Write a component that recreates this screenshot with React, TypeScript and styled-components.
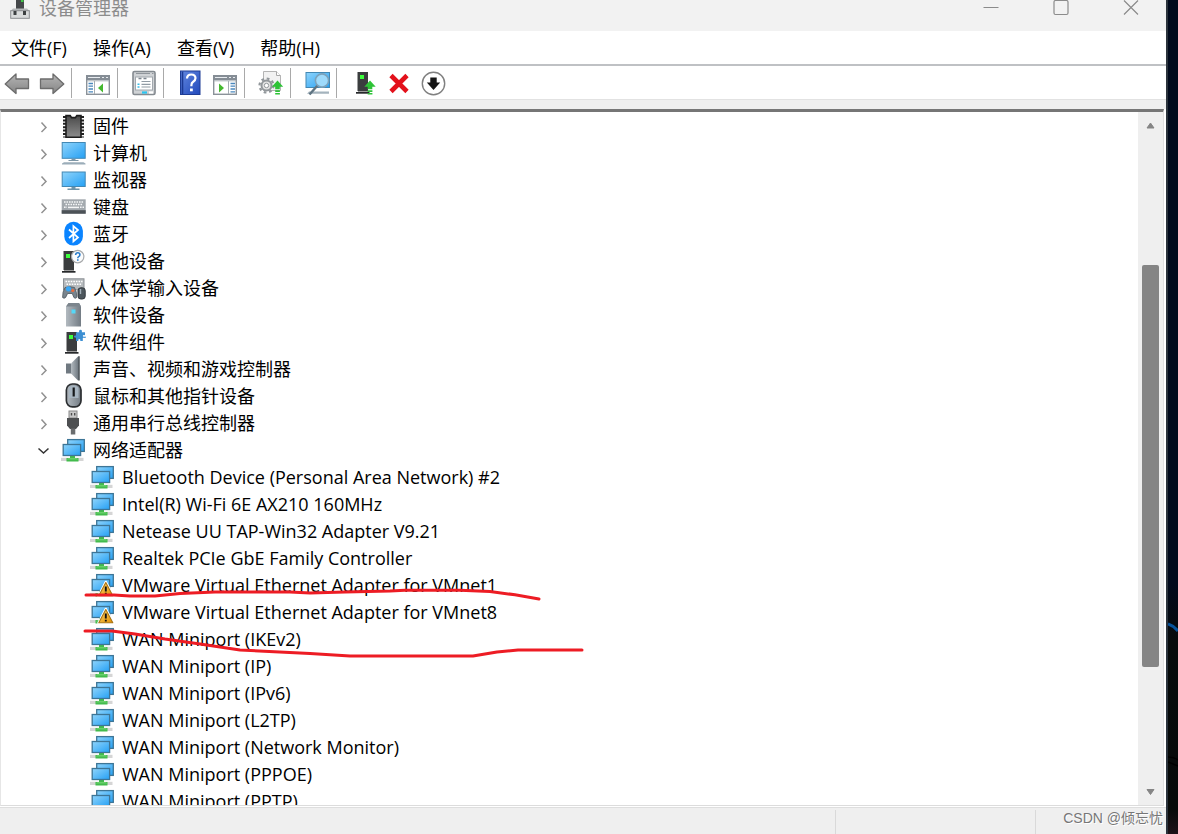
import React from "react";
import styled, { createGlobalStyle } from "styled-components";

const GlobalStyle = createGlobalStyle`
  * { box-sizing: border-box; }
  body {
    margin: 0;
    font-family: "Open Sans", "Noto Sans CJK SC", sans-serif;
    font-size: 18px;
    color: #000;
    background: #020b1b;
  }
  button { font: inherit; color: inherit; border: 0; padding: 0; background: none; }
  ul { list-style: none; margin: 0; padding: 0; }
  svg { display: block; flex: none; }
`;

const Desktop = styled.div`
  display: grid;
  grid-template-columns: minmax(0, 1fr) 12px;
  height: 100vh;
`;

const AppWindow = styled.main`
  display: flex;
  flex-direction: column;
  min-width: 0;
  min-height: 0;
  background: #fff;
`;

const Wallpaper = styled.div`
  border-left: 2px solid #2b333c;
  background: linear-gradient(#010a1c 0%, #010a1c 70%, #070b0c 77%, #070a09 97%, #1d1218 100%);
  overflow: hidden;
  display: flex;
  align-items: flex-end;
`;

const TitleBar = styled.header`
  display: flex;
  align-items: flex-start;
  height: 31px;
  padding-left: 10px;
  background: #f2f2f2;
`;

const Title = styled.h1`
  flex: 1;
  margin: 0 0 0 9px;
  font-size: 18px;
  line-height: 16px;
  font-weight: 400;
  color: #8c8c8c;
`;

const CaptionButton = styled.button`
  display: flex;
  justify-content: center;
  width: 70px;
  height: 31px;
`;

const MenuBar = styled.nav`
  display: flex;
  height: 33px;
  margin-left: -2px;
`;

const MenuItem = styled.button`
  padding: 0 13px;
  line-height: 34px;
  white-space: nowrap;
`;

const ToolBar = styled.div`
  display: flex;
  align-items: center;
  height: 35px;
  border-top: 2px solid #bfc1c4;
`;

const ToolButton = styled.button`
  display: flex;
  justify-content: center;
  align-items: center;
  width: 35px;
  height: 33px;
  &:first-child { margin-left: -1px; }
`;

const ToolDivider = styled.span`
  width: 1px;
  height: 30px;
  margin: 0 8px 0 2px;
  background: #a9a9a9;
`;

const Band = styled.div`
  height: 10px;
  background: #efefef;
  border-top: 1px solid #e2e2e2;
`;

const TreeFrame = styled.section`
  position: relative;
  flex: 1;
  min-height: 0;
  display: flex;
  margin-right: 2px;
  border-top: 3px solid #767676;
  border-bottom: 1px solid #dcdcdc;
  border-left: 1px solid #e6e6e6;
  border-right: 1px solid #dfdfdf;
`;

const TreeViewport = styled.div`
  flex: 1;
  min-width: 0;
  padding-top: 1px;
  overflow: hidden;
`;

const TreeRow = styled.div<{ $child?: boolean }>`
  display: flex;
  align-items: center;
  gap: 6px;
  height: 27px;
  padding-left: ${(p) => (p.$child ? 89 : 30)}px;
  line-height: 27px;
  white-space: nowrap;
`;

const Expander = styled.button`
  display: flex;
  align-items: center;
  justify-content: center;
  width: 24px;
  height: 27px;
`;

const ScrollBar = styled.div`
  display: flex;
  flex-direction: column;
  align-items: center;
  width: 25px;
  background: #efefef;
`;

const ScrollArrow = styled.button`
  display: flex;
  align-items: center;
  justify-content: center;
  width: 25px;
  height: 27px;
`;

const ScrollTrack = styled.div`
  display: grid;
  grid-template-rows: 126fr 402fr 111fr;
  flex: 1;
  width: 17px;
`;

const ScrollThumb = styled.div`
  grid-row: 2;
  border-radius: 2px;
  background: #858585;
`;

const Annotation = styled.svg`
  position: absolute;
  left: 0;
  top: 0;
  pointer-events: none;
`;

const StatusBar = styled.footer`
  display: grid;
  grid-template-columns: minmax(0, 1fr) 200px 131px;
  height: 27px;
  margin-top: 1px;
  background: #efefef;
  border-top: 1px solid #dedede;
`;

const StatusCell = styled.div`
  display: flex;
  align-items: flex-start;
  justify-content: flex-end;
  margin-top: 2px;
  padding-right: 3px;
  border-left: 1px solid #d9d9d9;
  font-family: "Liberation Sans", "Noto Sans CJK SC", sans-serif;
  font-size: 14px;
  line-height: 16px;
  color: #777;
  white-space: nowrap;
  text-shadow: 1px 1px 0 #fff;
  &:first-child { border-left: 0; }
`;

const Gradients = () => (
  <svg width="0" height="0" aria-hidden>
    <defs>
      <linearGradient id="screen" x1="0" y1="0" x2="1" y2="1">
        <stop offset="0" stopColor="#8fd4fb" />
        <stop offset="1" stopColor="#25a0f4" />
      </linearGradient>
      <linearGradient id="steel" x1="0" y1="0" x2="1" y2="0">
        <stop offset="0" stopColor="#b3bac0" />
        <stop offset="1" stopColor="#737c84" />
      </linearGradient>
      <linearGradient id="chip" x1="0" y1="0" x2="0" y2="1">
        <stop offset="0" stopColor="#4a4a4a" />
        <stop offset="1" stopColor="#8b8b8b" />
      </linearGradient>
      <linearGradient id="arrow" x1="0" y1="0" x2="0" y2="1">
        <stop offset="0" stopColor="#b5b5b5" />
        <stop offset="1" stopColor="#858585" />
      </linearGradient>
      <linearGradient id="help" x1="0" y1="0" x2="1" y2="1">
        <stop offset="0" stopColor="#6288e0" />
        <stop offset="1" stopColor="#2149bb" />
      </linearGradient>
      <linearGradient id="warn" x1="0" y1="0" x2="1" y2="1">
        <stop offset="0" stopColor="#ffd66b" />
        <stop offset="1" stopColor="#e08d00" />
      </linearGradient>
    </defs>
  </svg>
);

const Glyph = ({ children }: { children: React.ReactNode }) => (
  <svg width="26" height="27" viewBox="0 0 26 27" aria-hidden>{children}</svg>
);

const Network = ({ warning }: { warning?: boolean }) => (
  <Glyph>
    <rect x="0" y="20.8" width="22.5" height="3.2" fill="#d5d5d5" />
    <path d="M9 18h5v3h3.500v3.500H5.500V21H9z" fill="#43bb4d" />
    <path d="M5.500 22.500l2-1.500h8l2 1.500z" fill="#69cf6c" />
    <rect x="6.7" y="2.6" width="16.6" height="11.8" fill="url(#screen)" stroke="#3d7596" strokeWidth="1.3" />
    <rect x="2.2" y="7.5" width="17.4" height="11" fill="url(#screen)" stroke="#3d7596" strokeWidth="1.3" />
    {warning && (
      <>
        <path d="M8.500 24L15.800 10l7.400 14z" fill="url(#warn)" stroke="#fff" strokeWidth="2.6" strokeLinejoin="round" />
        <path d="M8.800 23.800L15.800 10.600l7 13.200z" fill="url(#warn)" stroke="#a87415" strokeWidth="1.1" strokeLinejoin="round" />
        <path d="M15.8 14.5v5M15.8 20.8v1.8" stroke="#111" strokeWidth="1.9" />
      </>
    )}
  </Glyph>
);

const Firmware = () => (
  <Glyph>
    <path d="M3.5 3v21.5M21.5 3v21.5" stroke="#222" strokeWidth="3" strokeDasharray="2 1.4" />
    <path d="M5 2.6h4.2l1.4 2h3.8l1.4-2H20v21.6H5z" fill="url(#chip)" stroke="#1d1d1d" strokeWidth="1.6" />
  </Glyph>
);

const Computer = () => (
  <Glyph>
    <rect x="1.2" y="2.5" width="23" height="15.8" fill="url(#screen)" stroke="#4288b4" />
    <path d="M10.5 19h4v1h3v1h-10v-1h3z" fill="#7d96a6" />
    <path d="M3 22.200h19.500l2 1.200v1.200H1v-1.200z" fill="#9badb9" />
  </Glyph>
);

const Monitor = () => (
  <Glyph>
    <rect x="1.2" y="5" width="23" height="14.5" fill="url(#screen)" stroke="#4288b4" />
    <path d="M10.5 20h4v1.600h4v1.400h-12v-1.400h4z" fill="#6e94a9" />
  </Glyph>
);

const Keyboard = () => (
  <Glyph>
    <rect x="0.7" y="5.3" width="24" height="14.4" fill="#a3a9ae" />
    <rect x="0.7" y="16.2" width="24" height="3.5" fill="#4c5257" />
    <path d="M3 8h20M4.5 10.6h17M3 13.2h3M19 13.2h4" stroke="#f5f6f7" strokeWidth="1.5" strokeDasharray="1.6 .9" />
    <path d="M7 13.4h11" stroke="#f5f6f7" strokeWidth="1.5" />
  </Glyph>
);

const Bluetooth = () => (
  <Glyph>
    <rect x="3.3" y="0.8" width="18.6" height="23.8" rx="9" fill="#0a84ff" />
    <path d="M8 8.500l9 8-4.600 4V5l4.600 4-9 8" fill="none" stroke="#fff" strokeWidth="1.7" />
  </Glyph>
);

const Tower = ({ x = 0 }: { x?: number }) => (
  <g transform={`translate(${x} 0)`}>
    <path d="M2.5 3H13v19H2.5z" fill="#3b3d3f" />
    <path d="M1 23h13.5v1.7H1z" fill="#26282a" />
    <path d="M3 22h10v1H3z" fill="#9b9b9b" />
    <rect x="5" y="6" width="4" height="4" fill="#3dff3d" />
  </g>
);

const OtherDevice = () => (
  <Glyph>
    <Tower />
    <circle cx="16.7" cy="8.6" r="6.2" fill="#fbfcfd" stroke="#a7a9ab" strokeWidth="1.2" />
    <path d="M14.6 7q.2-2.2 2.2-2.2t2.1 1.9q0 1.2-1.2 1.9-.9.5-.9 1.6M16.8 11.2v1.5" fill="none" stroke="#287bca" strokeWidth="1.6" />
  </Glyph>
);

const HumanInput = () => (
  <Glyph>
    <rect x="2.5" y="3.8" width="20.5" height="11" fill="#b6babd" stroke="#8b9095" />
    <path d="M4.5 6.5h17M5.5 9.2h15" stroke="#fff" strokeWidth="1.5" strokeDasharray="1.6 1" />
    <path d="M4 12.5q5-1.6 9.500 0 2.600 4.500 2.200 10-1.600 1.500-2.800 0l-1.600-4H6.600l-2 4q-1.600 1.500-3 0-.3-5.500 2.400-10z" fill="#7a858e" stroke="#4b555c" strokeWidth=".8" />
    <circle cx="7.500" cy="13.800" r="2.600" fill="#37a7f7" />
    <circle cx="11.800" cy="15.500" r="1.500" fill="#ef6a39" />
    <rect x="17" y="12.800" width="7.200" height="11.200" rx="2.800" fill="#4d565d" stroke="#33393e" />
    <path d="M19.500 14v5" stroke="#a3b0ba" strokeWidth="1.400" />
  </Glyph>
);

const SoftwareDevice = () => (
  <Glyph>
    <path d="M7.500 1h10.500l2 3.500v20H5v-20z" fill="url(#steel)" />
    <path d="M7.500 1h10.500l2 3.500H5z" fill="#7c858d" />
    <rect x="10.500" y="7.500" width="4" height="4" fill="#55d8f8" />
  </Glyph>
);

const SoftwareComponent = () => (
  <Glyph>
    <Tower x={3} />
    <path
      d="M15 3.200h3.200q-.7-2.500 1.300-2.500t1.300 2.500H24v3q-2.200-.6-2.200.8t2.900.4v1.600q-2.900-.4-2.900 0V12h-2.500q.4-2-1-2t-1 2H15V8.500q-2 .5-2-1t2-1z"
      fill="#3c8fd2"
    />
  </Glyph>
);

const Speaker = () => (
  <Glyph>
    <path d="M5 7.500h5v10H5z" fill="#707981" />
    <path d="M10 7.500L17 .5v24l-7-7z" fill="url(#steel)" />
    <path d="M17 .3h1.800v24.200H17z" fill="#565d63" />
  </Glyph>
);

const Mouse = () => (
  <Glyph>
    <rect x="5.400" y="1" width="14.600" height="22.800" rx="6" fill="url(#steel)" stroke="#2b2e31" strokeWidth="1.700" />
    <path d="M8 5q1-2.500 4.700-2.500T17.500 5v10h-9.500z" fill="#a7b5c1" />
    <path d="M12.700 4.500v9" stroke="#17191b" strokeWidth="2.200" />
  </Glyph>
);

const Usb = () => (
  <Glyph>
    <rect x="8" y="1" width="8" height="7" fill="#c9c9c9" stroke="#8a8a8a" />
    <path d="M10.500 3v2.500M13.700 3v2.500" stroke="#4e4e4e" strokeWidth="1.400" />
    <path d="M6 8h12v7.500L15 19H9l-3-3.500z" fill="#4d4f51" />
    <path d="M9.800 18.500h4.500v6H9.800z" fill="#6a6c6e" />
  </Glyph>
);

const ToolGlyph = ({ children }: { children: React.ReactNode }) => (
  <svg width="26" height="26" viewBox="0 0 26 26" aria-hidden>{children}</svg>
);

const ArrowPath = () => (
  <path d="M1.200 14L12 4v5h12.500v9.500H12V23.500z" fill="url(#arrow)" stroke="#6c6c6c" strokeWidth="1.300" strokeLinejoin="round" />
);

const GreenUp = () => (
  <g fill="#2ec337">
    <path d="M19.500 10.500l5.700 6.200h-3.400v2.500h-4.600v-2.500h-3.400z" />
    <path d="M17.200 20.300h4.700v1.600h-4.700zM17.200 23h4.700v1.600h-4.700z" />
  </g>
);

const Panel = ({ mirrored }: { mirrored?: boolean }) => (
  <ToolGlyph>
    <rect x="1.700" y="5.700" width="22.600" height="18.600" fill="#fff" stroke="#8b9299" strokeWidth="1.400" />
    <path d="M1 5h24v5H1z" fill="#858d95" />
    <path d="M3 7.500h12M17 7.500h2M21 7.500h2" stroke="#e8ecf0" strokeWidth="1.200" />
    <path d={mirrored ? "M2 10.800h22M16.500 11v13" : "M2 10.800h22M9.500 11v13"} stroke="#a6adb3" />
    <path
      d={mirrored ? "M18.500 13.500h4.500M18.500 16.200h4.500M18.500 19h4.500M18.500 21.800h4.500" : "M3.500 13.500H8M3.500 16.200H8M3.500 19H8M3.500 21.800H8"}
      stroke="#4b88bd"
      strokeWidth="1.300"
    />
    <path d={mirrored ? "M7 13.500l5 4.500-5 4.500z" : "M18 13.500l-5 4.500 5 4.500z"} fill="#45b82f" />
  </ToolGlyph>
);

const tools: { label: string; icon: React.ReactNode; divider?: boolean }[] = [
  { label: "后退", icon: <ToolGlyph><ArrowPath /></ToolGlyph> },
  { label: "前进", icon: <ToolGlyph><g transform="matrix(-1 0 0 1 26 0)"><ArrowPath /></g></ToolGlyph>, divider: true },
  { label: "显示/隐藏控制台树", icon: <Panel />, divider: true },
  {
    label: "属性",
    divider: true,
    icon: (
      <ToolGlyph>
        <rect x="2" y="1.500" width="22" height="23" rx="1.500" fill="#cfd2d5" stroke="#848a90" strokeWidth="1.600" />
        <path d="M5 3.500h14M21 3.500h1.500" stroke="#8f959b" strokeWidth="1.200" />
        <rect x="4.500" y="7" width="17" height="13" fill="#fff" stroke="#a2a8ae" />
        <path d="M7.500 8.500h3M12.500 8.500h3" stroke="#7c858e" strokeWidth="1.500" />
        <path d="M10.500 11.500h9M10.500 14.300h9M10.500 17h9" stroke="#919ba4" strokeWidth="1.200" />
        <path d="M6.500 14.300h2M6.500 17h2" stroke="#37bce6" strokeWidth="1.400" />
        <path d="M11 22.500h5" stroke="#28c5f1" strokeWidth="2.200" />
        <path d="M18 22.500h4" stroke="#fff" strokeWidth="2.200" />
      </ToolGlyph>
    ),
  },
  {
    label: "帮助",
    icon: (
      <ToolGlyph>
        <rect x="3.500" y="1" width="19.500" height="23.500" fill="url(#help)" stroke="#1f3d96" />
        <path d="M5.500 1.500v22.500" stroke="#1c3a94" strokeWidth="1.600" />
        <path d="M10 8.500q.2-4 4.300-4t4.200 3.600q0 2.300-2.300 3.700-1.800 1.100-1.800 3.400v1" fill="none" stroke="#fff" strokeWidth="2.200" />
        <rect x="13" y="18.500" width="2.800" height="2.800" fill="#fff" />
      </ToolGlyph>
    ),
  },
  { label: "显示/隐藏操作窗格", icon: <Panel mirrored />, divider: true },
  {
    label: "更新驱动程序",
    divider: true,
    icon: (
      <ToolGlyph>
        <path d="M5.500 1.500h13l4 4v15h-17z" fill="#f2f2f2" stroke="#b4b4b4" />
        <path d="M18.500 1.500v4h4" fill="#fff" stroke="#a8a8a8" />
        <circle cx="8.500" cy="15.500" r="5" fill="#e4e4e4" stroke="#92979b" strokeWidth="2" />
        <circle cx="8.500" cy="15.500" r="7" fill="none" stroke="#92979b" strokeWidth="2.200" strokeDasharray="2.750 2.750" />
        <circle cx="8.500" cy="15.500" r="2.200" fill="#fff" stroke="#92979b" />
        <GreenUp />
      </ToolGlyph>
    ),
  },
  {
    label: "扫描检测硬件改动",
    divider: true,
    icon: (
      <ToolGlyph>
        <rect x="2" y="2.500" width="23.500" height="15" fill="url(#screen)" stroke="#4288b4" />
        <path d="M5 21.500h20v2.200H3z" fill="#a4b3bd" />
        <path d="M13.500 15.500L5.500 24.500" stroke="#5f7482" strokeWidth="2.400" />
        <circle cx="18" cy="10.500" r="6.600" fill="#9edafb" stroke="#7ba2bb" strokeWidth="1.600" />
      </ToolGlyph>
    ),
  },
  { label: "启用设备", icon: <ToolGlyph><g transform="translate(5 -1)"><Tower /></g><g transform="translate(.5 0)"><GreenUp /></g></ToolGlyph> },
  {
    label: "卸载设备",
    icon: <ToolGlyph><path d="M6 5.500l16 16M22 5.500l-16 16" stroke="#e3111b" strokeWidth="4.600" /></ToolGlyph>,
  },
  {
    label: "禁用设备",
    icon: (
      <ToolGlyph>
        <circle cx="13.500" cy="13.500" r="11.200" fill="#fff" stroke="#808080" strokeWidth="1.400" />
        <path d="M10.300 7.500h6.400v5h3.500L13.500 20 6.800 12.500h3.500z" fill="#151515" />
      </ToolGlyph>
    ),
  },
];

const categories: { name: string; icon: React.ReactNode; open?: boolean }[] = [
  { name: "固件", icon: <Firmware /> },
  { name: "计算机", icon: <Computer /> },
  { name: "监视器", icon: <Monitor /> },
  { name: "键盘", icon: <Keyboard /> },
  { name: "蓝牙", icon: <Bluetooth /> },
  { name: "其他设备", icon: <OtherDevice /> },
  { name: "人体学输入设备", icon: <HumanInput /> },
  { name: "软件设备", icon: <SoftwareDevice /> },
  { name: "软件组件", icon: <SoftwareComponent /> },
  { name: "声音、视频和游戏控制器", icon: <Speaker /> },
  { name: "鼠标和其他指针设备", icon: <Mouse /> },
  { name: "通用串行总线控制器", icon: <Usb /> },
  { name: "网络适配器", icon: <Network />, open: true },
];

const adapters: { name: string; warning?: boolean }[] = [
  { name: "Bluetooth Device (Personal Area Network) #2" },
  { name: "Intel(R) Wi-Fi 6E AX210 160MHz" },
  { name: "Netease UU TAP-Win32 Adapter V9.21" },
  { name: "Realtek PCIe GbE Family Controller" },
  { name: "VMware Virtual Ethernet Adapter for VMnet1", warning: true },
  { name: "VMware Virtual Ethernet Adapter for VMnet8", warning: true },
  { name: "WAN Miniport (IKEv2)" },
  { name: "WAN Miniport (IP)" },
  { name: "WAN Miniport (IPv6)" },
  { name: "WAN Miniport (L2TP)" },
  { name: "WAN Miniport (Network Monitor)" },
  { name: "WAN Miniport (PPPOE)" },
  { name: "WAN Miniport (PPTP)" },
];

export default function App() {
  return (
    <>
      <GlobalStyle />
      <Desktop>
        <AppWindow>
          <TitleBar>
            <svg width="20" height="19" viewBox="0 0 20 19" aria-hidden>
              <path d="M6 0h8v9H6z" fill="#45484a" />
              <path d="M11 0h2.500v2H11z" fill="#42c84a" />
              <path d="M3 8.500h14l3 3H0z" fill="#b5b8ba" />
              <rect x=".7" y="10.700" width="18.600" height="7.600" fill="#d9dbdc" stroke="#8a8d90" />
              <path d="M3.500 11h3v4h-3zM13 11h3v4h-3z" fill="#3d4042" />
            </svg>
            <Title>设备管理器</Title>
            <CaptionButton aria-label="最小化">
              <svg width="16" height="16" viewBox="0 0 16 16"><path d="M.5 7.500h15" stroke="#8b8b8b" /></svg>
            </CaptionButton>
            <CaptionButton aria-label="最大化">
              <svg width="16" height="16" viewBox="0 0 16 16"><rect x="1" y=".5" width="14" height="14" rx="1.500" fill="none" stroke="#8b8b8b" strokeWidth="1.200" /></svg>
            </CaptionButton>
            <CaptionButton aria-label="关闭">
              <svg width="16" height="16" viewBox="0 0 16 16"><path d="M1 .5l14 14M15 .5L1 14.500" stroke="#8b8b8b" strokeWidth="1.200" /></svg>
            </CaptionButton>
          </TitleBar>
          <MenuBar>
            {["文件(F)", "操作(A)", "查看(V)", "帮助(H)"].map((m) => <MenuItem key={m}>{m}</MenuItem>)}
          </MenuBar>
          <ToolBar role="toolbar">
            {tools.map((t) => (
              <React.Fragment key={t.label}>
                <ToolButton aria-label={t.label}>{t.icon}</ToolButton>
                {t.divider && <ToolDivider />}
              </React.Fragment>
            ))}
          </ToolBar>
          <Band />
          <TreeFrame>
            <TreeViewport>
              <ul>
                {categories.map((c) => (
                  <li key={c.name}>
                    <TreeRow>
                      <Expander aria-label={c.name} aria-expanded={!!c.open}>
                        <svg width="12" height="12" viewBox="0 0 12 12" fill="none">
                          {c.open
                            ? <path d="M1.500 3.500L6.500 8l5-4.500" stroke="#333" strokeWidth="1.500" />
                            : <path d="M4.500 1.500l4.500 5-4.500 4.500" stroke="#919191" strokeWidth="1.500" />}
                        </svg>
                      </Expander>
                      {c.icon}
                      <span>{c.name}</span>
                    </TreeRow>
                    {c.open && (
                      <ul>
                        {adapters.map((a) => (
                          <li key={a.name}>
                            <TreeRow $child>
                              <Network warning={a.warning} />
                              <span>{a.name}</span>
                            </TreeRow>
                          </li>
                        ))}
                      </ul>
                    )}
                  </li>
                ))}
              </ul>
            </TreeViewport>
            <ScrollBar>
              <ScrollArrow aria-label="向上滚动">
                <svg width="10" height="8" viewBox="0 0 10 8"><path d="M4.500 1l3.500 5H1z" fill="#858585" stroke="#858585" strokeLinejoin="round" /></svg>
              </ScrollArrow>
              <ScrollTrack><ScrollThumb /></ScrollTrack>
              <ScrollArrow aria-label="向下滚动">
                <svg width="10" height="8" viewBox="0 0 10 8"><path d="M4.500 6.500l3.500-5H1z" fill="#858585" stroke="#858585" strokeLinejoin="round" /></svg>
              </ScrollArrow>
            </ScrollBar>
            <Annotation width="600" height="560" viewBox="1 112 600 560" fill="none" stroke="#ed1c24" strokeWidth="3" strokeLinecap="round" strokeLinejoin="round" aria-hidden>
              <path d="M86 595h28l16 1h25l25-2.500 35-1.500h75l20 1 35-1 45-1 15-.7h55l30 1.200 25 3.300 24 4.200" />
              <path d="M85 631h27l23 3 30 5 35 5 40 6 70 3.500 40 2.500h123l24-4 21-2h64" />
            </Annotation>
          </TreeFrame>
          <StatusBar>
            <StatusCell />
            <StatusCell />
            <StatusCell>CSDN @倾忘忧</StatusCell>
          </StatusBar>
        </AppWindow>
        <Wallpaper>
          <svg width="10" height="234" viewBox="0 0 10 234" aria-hidden>
            <path d="M0 24q6 2 10 7" fill="none" stroke="#07529b" strokeWidth="3" />
            <path d="M0 157q6 0 10 3M0 162l10 4" fill="none" stroke="#000" strokeWidth="1.500" />
          </svg>
        </Wallpaper>
      </Desktop>
      <Gradients />
    </>
  );
}
